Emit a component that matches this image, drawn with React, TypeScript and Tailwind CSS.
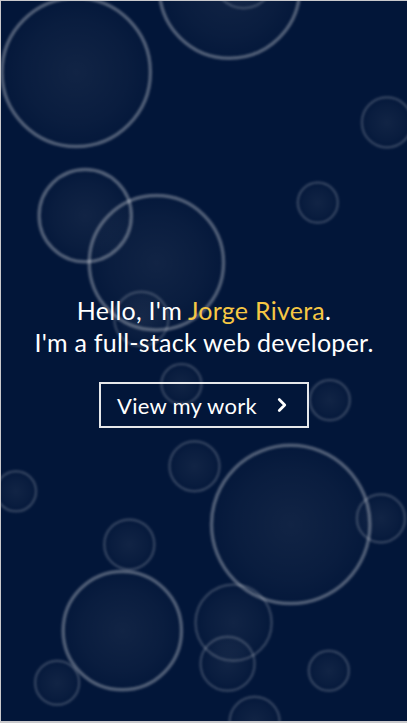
import { ChevronRight } from "lucide-react";

const bubbles: [number, number, number][] = [
  [75, 72, 74],
  [228, -12, 70],
  [242, -22, 30],
  [385, 122, 25],
  [316, 202, 20],
  [84, 215, 46],
  [155, 262, 67],
  [140, 318, 27],
  [180, 383, 20],
  [328, 399, 20],
  [193, 465, 25],
  [15, 490, 20],
  [289, 523, 79],
  [379, 517, 24],
  [128, 543, 25],
  [121, 629, 59],
  [232, 621, 38],
  [226, 662, 27],
  [56, 681, 22],
  [327, 669, 20],
  [253, 720, 25],
];

function Bubbles() {
  return (
    <svg className="pointer-events-none absolute inset-0 h-full w-full" viewBox="0 0 405 720" preserveAspectRatio="xMidYMid slice">
      <defs>
        <radialGradient id="fill">
          <stop offset="0%" stopColor="#ffffff" stopOpacity="0.06" />
          <stop offset="70%" stopColor="#ffffff" stopOpacity="0.03" />
          <stop offset="100%" stopColor="#ffffff" stopOpacity="0.01" />
        </radialGradient>
        <filter id="soft" x="-20%" y="-20%" width="140%" height="140%">
          <feGaussianBlur stdDeviation="1" />
        </filter>
      </defs>
      {bubbles.map(([cx, cy, r], i) => (
        <g key={i}>
          <circle cx={cx} cy={cy} r={r} fill="url(#fill)" />
          <circle
            cx={cx}
            cy={cy}
            r={r}
            fill="none"
            stroke="#ffffff"
            strokeOpacity={r > 40 ? 0.3 : 0.18}
            strokeWidth={r > 40 ? 3.5 : 2.5}
            filter="url(#soft)"
          />
        </g>
      ))}
    </svg>
  );
}

export default function App() {
  return (
    <div className="h-[723px] w-[407px] overflow-hidden border-l border-t border-b-2 border-[#c9c9cc] bg-[#021639]">
      <section className="relative flex h-full w-full flex-col items-center justify-center text-white" style={{ fontFamily: "Lato, 'Noto Sans', sans-serif" }}>
        <Bubbles />
        <div className="relative flex flex-col items-center tracking-[0.25px]">
          <h1 className="text-[25px] leading-[32px] font-normal">
            Hello, I'm <span className="text-[#f6c744]">Jorge Rivera</span>.
          </h1>
          <p className="text-[25px] leading-[32px]">I'm a full-stack web developer.</p>
          <button className="mt-[24px] flex h-[46px] w-[210px] items-center justify-center gap-[14px] border-2 border-white/90 pl-[2px] text-[22px]">
            View my work
            <ChevronRight size={22} strokeWidth={3} />
          </button>
        </div>
      </section>
    </div>
  );
}
